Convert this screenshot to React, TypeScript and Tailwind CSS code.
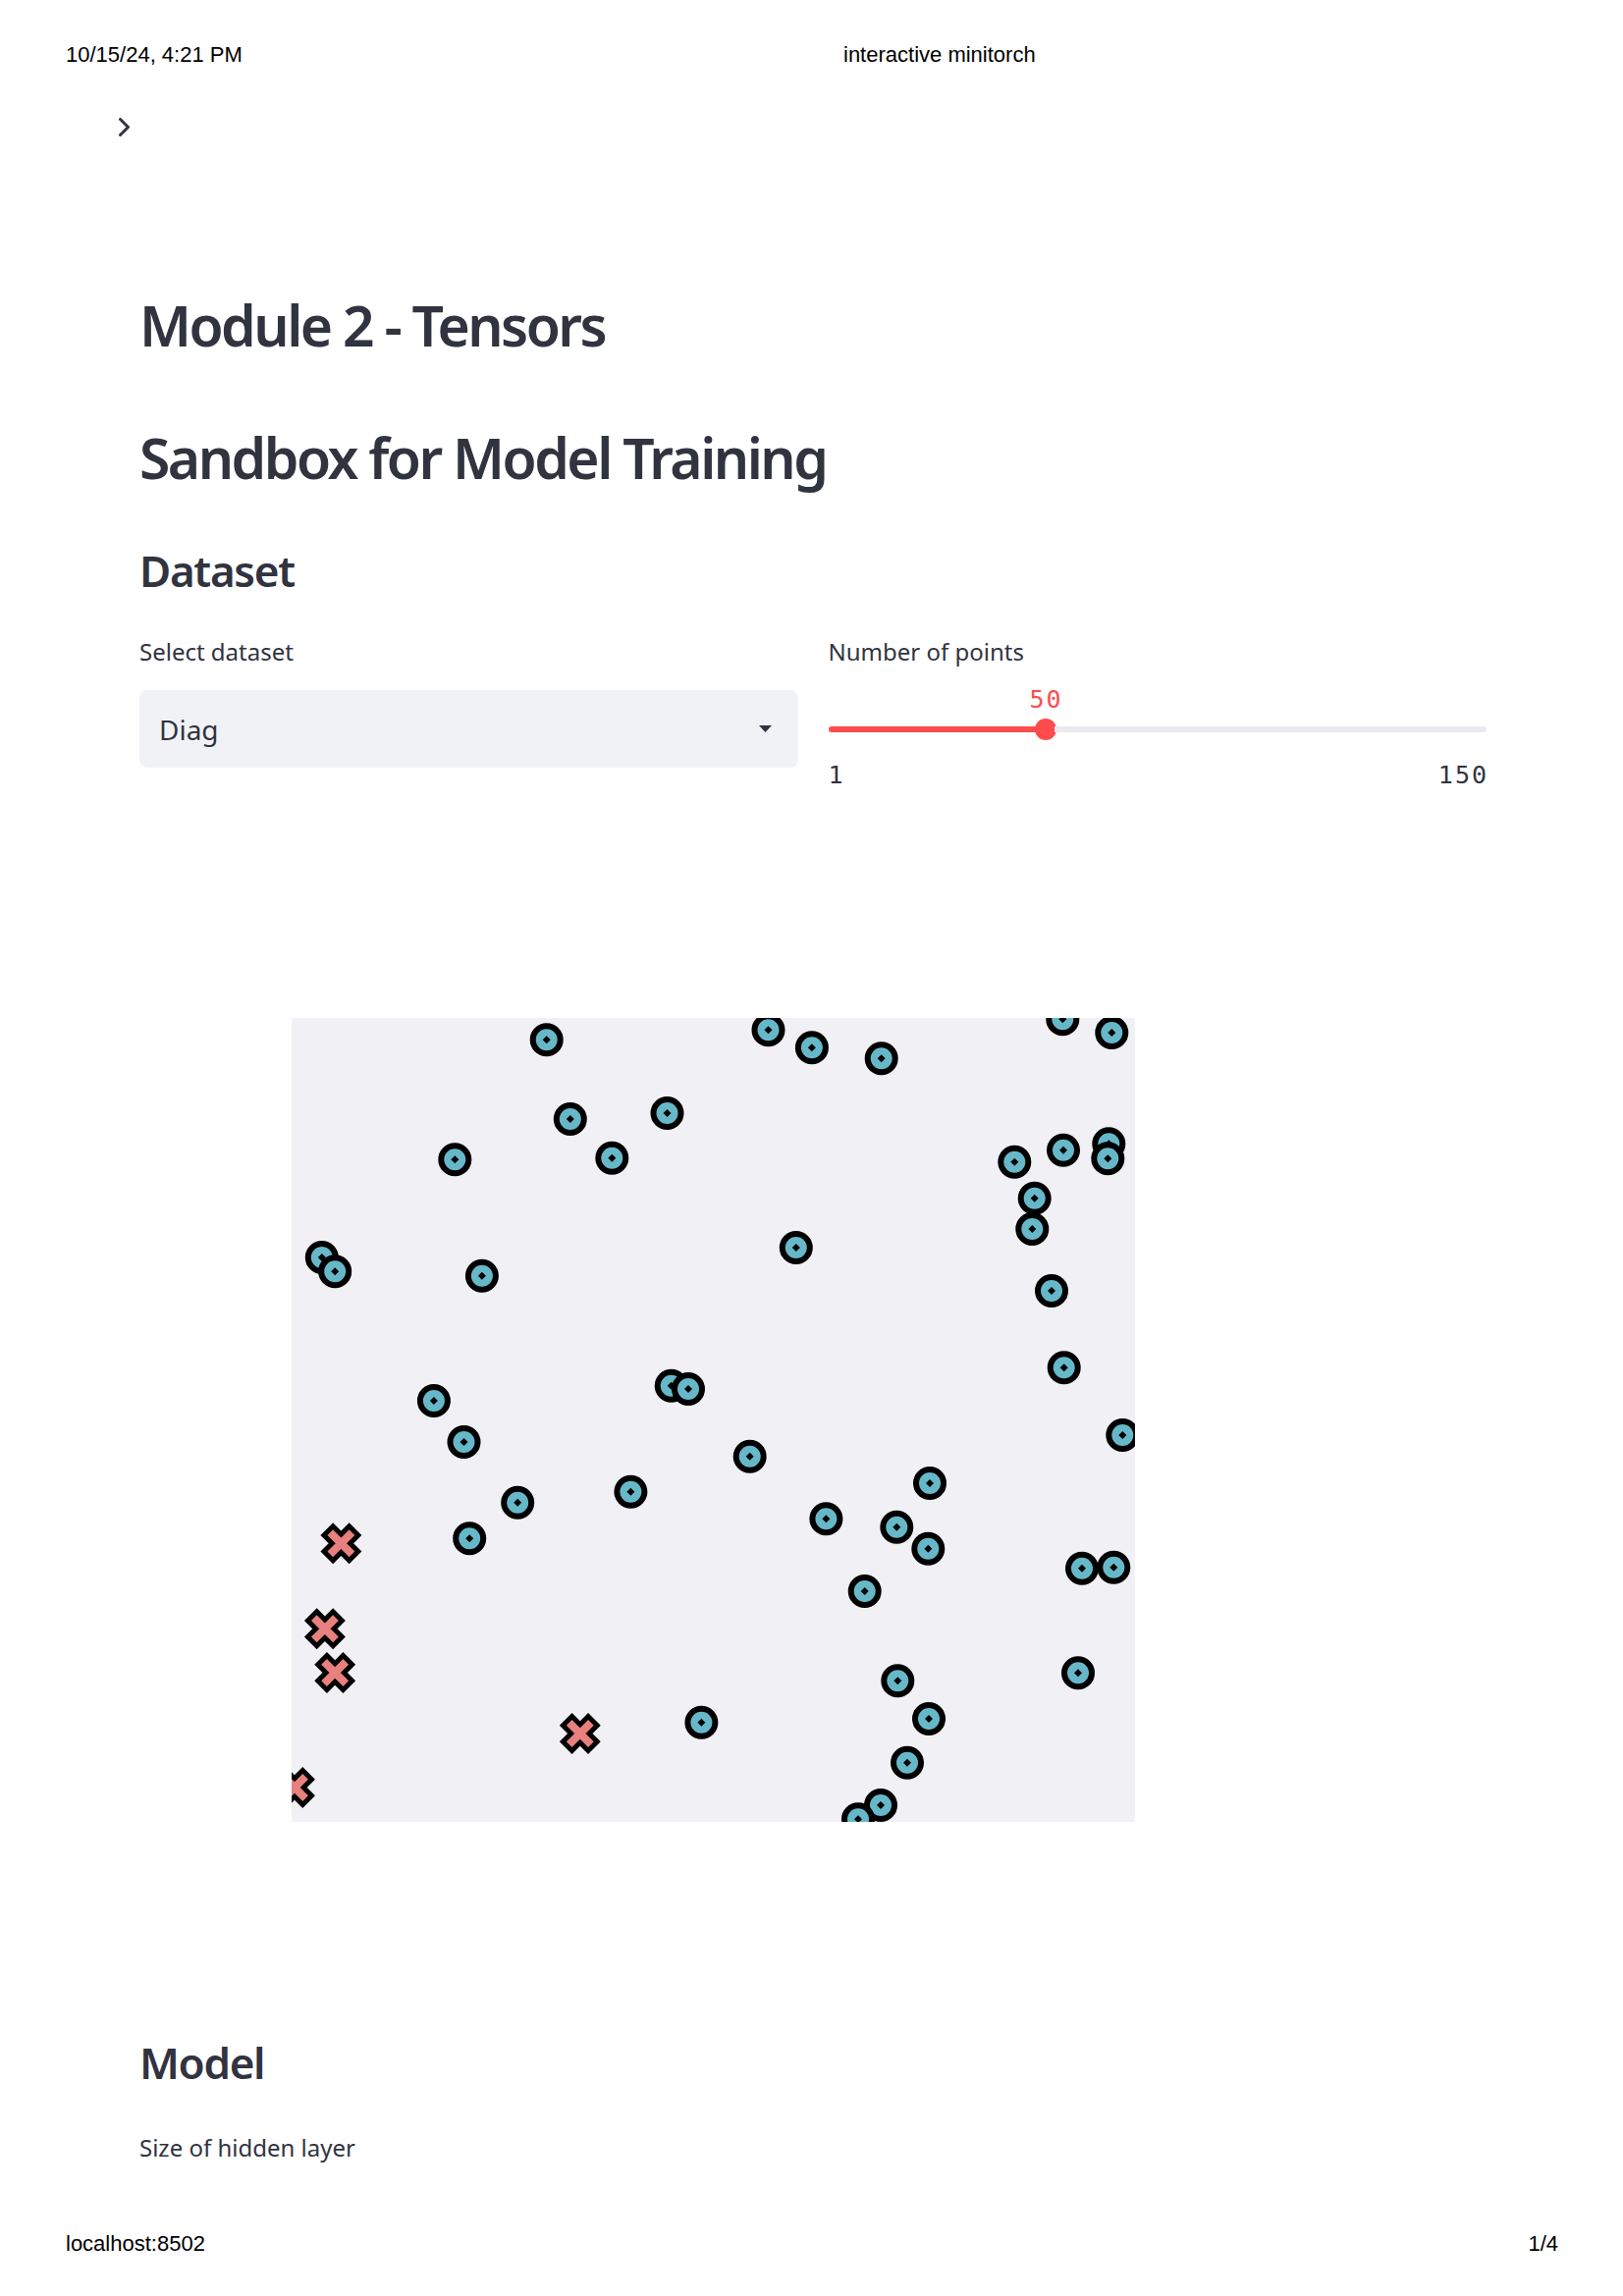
import React from "react"

const teal: [number, number][] = [
  [259.7, 22.3], [485.5, 12.3], [529.9, 30.3], [600.7, 41.3], [785.3, 1.3], [835.3, 15],
  [283.8, 103], [382.5, 97], [166.3, 144.3], [326.3, 142.7], [736.3, 146.7], [786, 134.7],
  [832.3, 128.3], [831.3, 143.3], [756.7, 183.7], [754.3, 215], [513.8, 234], [30.8, 244],
  [44.2, 258.3], [193.9, 262.7], [774, 278], [786.7, 356.3], [386.7, 374.7], [404, 378],
  [144.9, 390], [846.3, 425], [175.5, 432], [466.7, 446.7], [650, 474], [345.4, 482.7],
  [230.2, 493.7], [544.4, 510.3], [616.3, 518.7], [648.3, 540.7], [181.2, 530.3], [805, 560.7],
  [837.3, 559.7], [583.7, 584], [801, 667.3], [617.3, 675.3], [649, 714], [417.4, 717.7],
  [627, 758.7], [600, 802], [577, 816.3],
]

const crosses: [number, number][] = [
  [50.4, 535.3], [33.9, 622.3], [44.2, 667], [293.8, 729], [3, 784],
]

function Dot({ x, y }: { x: number; y: number }) {
  return (
    <g transform={`translate(${x} ${y})`}>
      <circle r={14} fill="#66b8c9" stroke="#000" strokeWidth={6} />
      <polygon points="0,-4 4,0 0,4 -4,0" fill="#000" />
    </g>
  )
}

function Cross({ x, y }: { x: number; y: number }) {
  const d = 14.6
  const s = 11.1
  return (
    <g transform={`translate(${x} ${y})`}>
      <path d={`M${-d},${-d}L${d},${d}M${-d},${d}L${d},${-d}`} stroke="#000" strokeWidth={18} />
      <path d={`M${-s},${-s}L${s},${s}M${-s},${s}L${s},${-s}`} stroke="#e8807d" strokeWidth={8} />
    </g>
  )
}

function ScatterPlot() {
  return (
    <div className="ml-[155px] mt-[235px] h-[819px] w-[859px] bg-[#f0f0f5] overflow-hidden">
      <svg width={859} height={819} viewBox="0 0 859 819" className="block">
        {teal.map(([x, y], i) => (
          <Dot key={`t${i}`} x={x} y={y} />
        ))}
        {crosses.map(([x, y], i) => (
          <Cross key={`x${i}`} x={x} y={y} />
        ))}
      </svg>
    </div>
  )
}

export default function App() {
  return (
    <div className="flex h-[2339px] w-[1653px] flex-col overflow-hidden bg-white text-[#31333f] font-['Noto_Sans',sans-serif]">
      {/* print header */}
      <header className="flex px-[67px] pt-[45px] text-[22px] leading-none text-black font-['Liberation_Sans',Arial,sans-serif]">
        <span className="w-[792px]">10/15/24, 4:21 PM</span>
        <span>interactive minitorch</span>
      </header>

      <div className="mt-[53px] pl-[116px]">
        <svg width={20} height={20} viewBox="0 0 20 20" className="block">
          <polyline points="6.5,1.5 14.5,9.5 6.5,17.5" fill="none" stroke="#31333f" strokeWidth={3} strokeLinecap="round" strokeLinejoin="round" />
        </svg>
      </div>

      <main className="flex flex-col pl-[142px] pr-[139px]">
        <h1 className="mt-[163px] text-[57px] font-semibold leading-none tracking-[-2.5px]">Module 2 - Tensors</h1>
        <h2 className="mt-[78px] text-[57px] font-semibold leading-none tracking-[-2.5px]">Sandbox for Model Training</h2>
        <h3 className="mt-[64px] text-[44px] font-semibold leading-none tracking-[-1.3px]">Dataset</h3>

        <div className="mt-[49px] grid grid-cols-2 gap-x-[31px]">
          <div className="flex flex-col">
            <label className="text-[24px] leading-none">Select dataset</label>
            <div className="mt-[27px] flex h-[79px] items-center justify-between rounded-[8px] bg-[#f0f2f6] pl-[20px] pr-[27px]">
              <span className="text-[28px] leading-none">Diag</span>
              <svg width={13} height={7} viewBox="0 0 13 7" className="block">
                <polygon points="0,0 13,0 6.5,7" fill="#31333f" />
              </svg>
            </div>
          </div>

          <div className="flex flex-col">
            <label className="text-[24px] leading-none">Number of points</label>
            <div className="mt-[24px] flex pl-[210px]">
              <div className="flex w-[22px] justify-center pl-[2px] text-[25px] leading-none tracking-[2px] text-[#ff4b4b] font-['DejaVu_Sans_Mono',monospace]">
                50
              </div>
            </div>
            <div className="mt-[7px] flex h-[22px] items-center">
              <div className="h-[6px] w-[212px] rounded-l-full bg-[#ff4b4b]" />
              <div className="-ml-[2px] h-[22px] w-[22px] shrink-0 rounded-full bg-[#ff4b4b]" />
              <div className="-ml-[2px] h-[6px] flex-1 rounded-r-full bg-[#e9eaef]" />
            </div>
            <div className="-mr-[2px] mt-[23px] flex justify-between text-[25px] leading-none tracking-[2px] font-['DejaVu_Sans_Mono',monospace]">
              <span>1</span>
              <span>150</span>
            </div>
          </div>
        </div>

        <ScatterPlot />

        <h3 className="mt-[223px] text-[44px] font-semibold leading-none tracking-[-1.3px]">Model</h3>
        <label className="mt-[53px] text-[24px] leading-none">Size of hidden layer</label>
      </main>

      {/* print footer */}
      <footer className="mt-auto flex justify-between pb-[42px] pl-[67px] pr-[66px] text-[22px] leading-none text-black font-['Liberation_Sans',Arial,sans-serif]">
        <span>localhost:8502</span>
        <span>1/4</span>
      </footer>
    </div>
  )
}
